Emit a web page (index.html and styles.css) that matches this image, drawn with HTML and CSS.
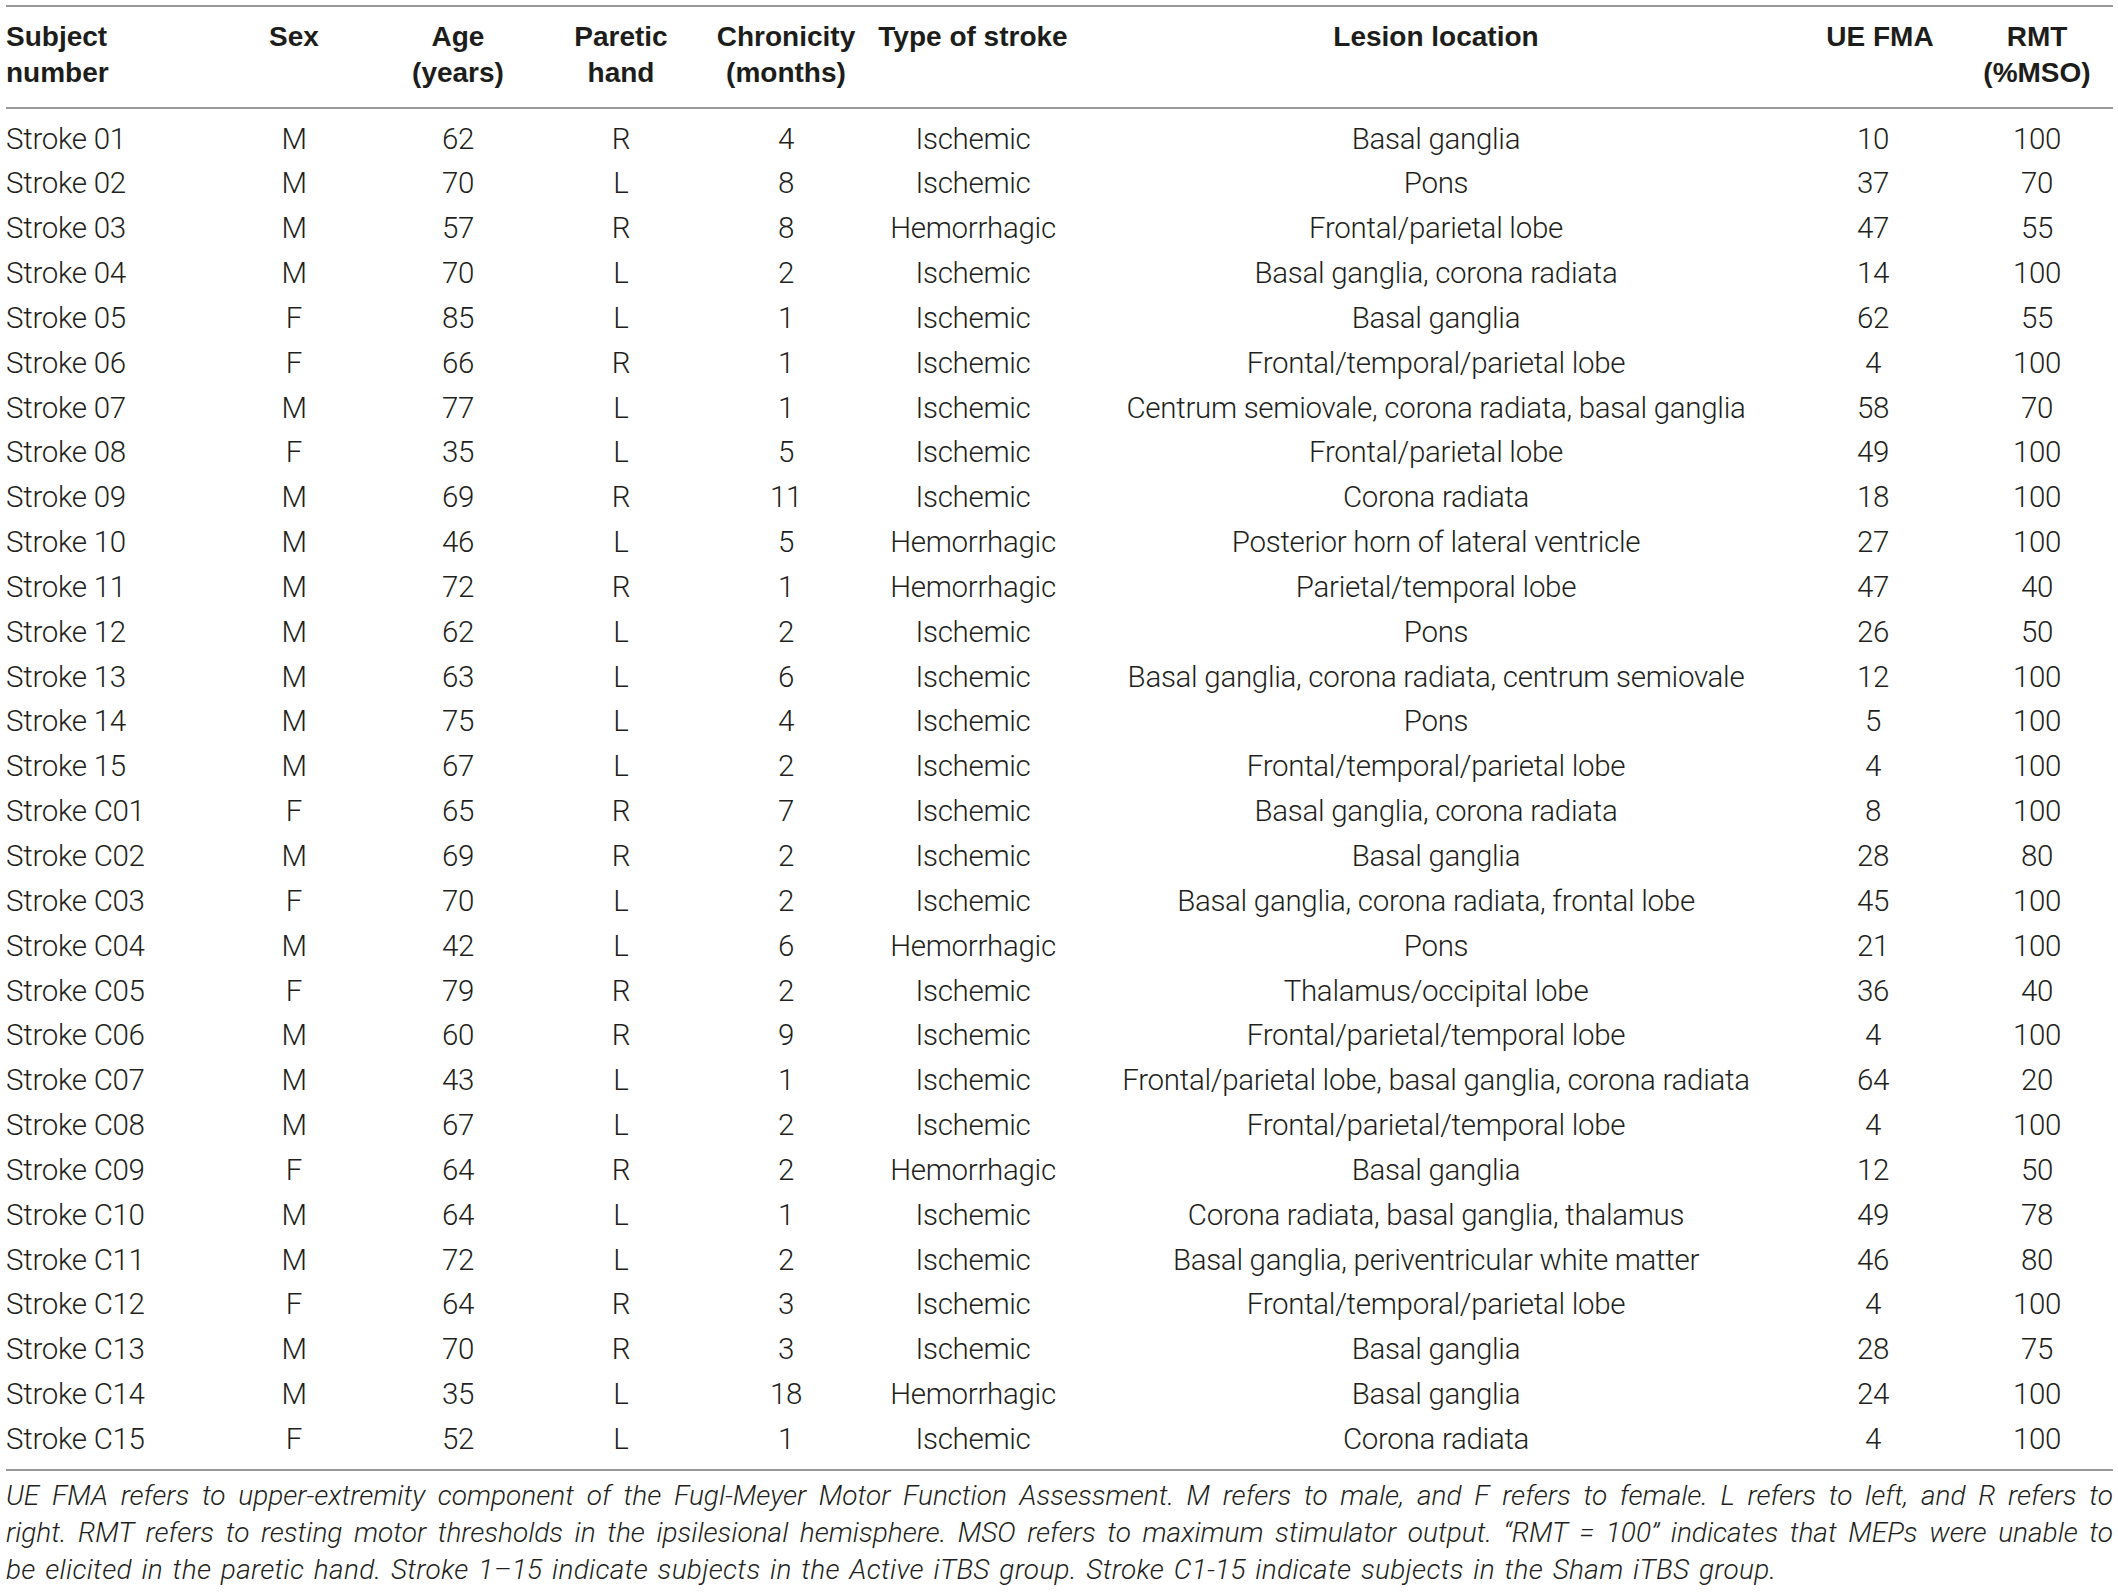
FILE: index.html
```html
<!DOCTYPE html>
<html lang="en">
<head>
<meta charset="utf-8">
<title>Subject characteristics</title>
<link rel="stylesheet" href="styles.css">
</head>
<body>
<div class="page">
  <table class="data">
    <colgroup>
      <col class="c-subj"><col class="c-sex"><col class="c-age"><col class="c-hand"><col class="c-chron"><col class="c-type"><col class="c-lesion"><col class="c-fma"><col class="c-rmt">
    </colgroup>
    <thead>
      <tr>
        <th class="left">Subject<br>number</th>
        <th>Sex</th>
        <th>Age<br>(years)</th>
        <th>Paretic<br>hand</th>
        <th class="chron">Chronicity<br>(months)</th>
        <th class="type">Type of stroke</th>
        <th>Lesion location</th>
        <th>UE FMA</th>
        <th class="rmt">RMT<br>(%MSO)</th>
      </tr>
    </thead>
    <tbody>
      <tr><td class="left">Stroke 01</td><td>M</td><td>62</td><td>R</td><td class="chron">4</td><td>Ischemic</td><td>Basal ganglia</td><td class="fma">10</td><td class="rmt">100</td></tr>
      <tr><td class="left">Stroke 02</td><td>M</td><td>70</td><td>L</td><td class="chron">8</td><td>Ischemic</td><td>Pons</td><td class="fma">37</td><td class="rmt">70</td></tr>
      <tr><td class="left">Stroke 03</td><td>M</td><td>57</td><td>R</td><td class="chron">8</td><td>Hemorrhagic</td><td>Frontal/parietal lobe</td><td class="fma">47</td><td class="rmt">55</td></tr>
      <tr><td class="left">Stroke 04</td><td>M</td><td>70</td><td>L</td><td class="chron">2</td><td>Ischemic</td><td>Basal ganglia, corona radiata</td><td class="fma">14</td><td class="rmt">100</td></tr>
      <tr><td class="left">Stroke 05</td><td>F</td><td>85</td><td>L</td><td class="chron">1</td><td>Ischemic</td><td>Basal ganglia</td><td class="fma">62</td><td class="rmt">55</td></tr>
      <tr><td class="left">Stroke 06</td><td>F</td><td>66</td><td>R</td><td class="chron">1</td><td>Ischemic</td><td>Frontal/temporal/parietal lobe</td><td class="fma">4</td><td class="rmt">100</td></tr>
      <tr><td class="left">Stroke 07</td><td>M</td><td>77</td><td>L</td><td class="chron">1</td><td>Ischemic</td><td>Centrum semiovale, corona radiata, basal ganglia</td><td class="fma">58</td><td class="rmt">70</td></tr>
      <tr><td class="left">Stroke 08</td><td>F</td><td>35</td><td>L</td><td class="chron">5</td><td>Ischemic</td><td>Frontal/parietal lobe</td><td class="fma">49</td><td class="rmt">100</td></tr>
      <tr><td class="left">Stroke 09</td><td>M</td><td>69</td><td>R</td><td class="chron">11</td><td>Ischemic</td><td>Corona radiata</td><td class="fma">18</td><td class="rmt">100</td></tr>
      <tr><td class="left">Stroke 10</td><td>M</td><td>46</td><td>L</td><td class="chron">5</td><td>Hemorrhagic</td><td>Posterior horn of lateral ventricle</td><td class="fma">27</td><td class="rmt">100</td></tr>
      <tr><td class="left">Stroke 11</td><td>M</td><td>72</td><td>R</td><td class="chron">1</td><td>Hemorrhagic</td><td>Parietal/temporal lobe</td><td class="fma">47</td><td class="rmt">40</td></tr>
      <tr><td class="left">Stroke 12</td><td>M</td><td>62</td><td>L</td><td class="chron">2</td><td>Ischemic</td><td>Pons</td><td class="fma">26</td><td class="rmt">50</td></tr>
      <tr><td class="left">Stroke 13</td><td>M</td><td>63</td><td>L</td><td class="chron">6</td><td>Ischemic</td><td>Basal ganglia, corona radiata, centrum semiovale</td><td class="fma">12</td><td class="rmt">100</td></tr>
      <tr><td class="left">Stroke 14</td><td>M</td><td>75</td><td>L</td><td class="chron">4</td><td>Ischemic</td><td>Pons</td><td class="fma">5</td><td class="rmt">100</td></tr>
      <tr><td class="left">Stroke 15</td><td>M</td><td>67</td><td>L</td><td class="chron">2</td><td>Ischemic</td><td>Frontal/temporal/parietal lobe</td><td class="fma">4</td><td class="rmt">100</td></tr>
      <tr><td class="left">Stroke C01</td><td>F</td><td>65</td><td>R</td><td class="chron">7</td><td>Ischemic</td><td>Basal ganglia, corona radiata</td><td class="fma">8</td><td class="rmt">100</td></tr>
      <tr><td class="left">Stroke C02</td><td>M</td><td>69</td><td>R</td><td class="chron">2</td><td>Ischemic</td><td>Basal ganglia</td><td class="fma">28</td><td class="rmt">80</td></tr>
      <tr><td class="left">Stroke C03</td><td>F</td><td>70</td><td>L</td><td class="chron">2</td><td>Ischemic</td><td>Basal ganglia, corona radiata, frontal lobe</td><td class="fma">45</td><td class="rmt">100</td></tr>
      <tr><td class="left">Stroke C04</td><td>M</td><td>42</td><td>L</td><td class="chron">6</td><td>Hemorrhagic</td><td>Pons</td><td class="fma">21</td><td class="rmt">100</td></tr>
      <tr><td class="left">Stroke C05</td><td>F</td><td>79</td><td>R</td><td class="chron">2</td><td>Ischemic</td><td>Thalamus/occipital lobe</td><td class="fma">36</td><td class="rmt">40</td></tr>
      <tr><td class="left">Stroke C06</td><td>M</td><td>60</td><td>R</td><td class="chron">9</td><td>Ischemic</td><td>Frontal/parietal/temporal lobe</td><td class="fma">4</td><td class="rmt">100</td></tr>
      <tr><td class="left">Stroke C07</td><td>M</td><td>43</td><td>L</td><td class="chron">1</td><td>Ischemic</td><td>Frontal/parietal lobe, basal ganglia, corona radiata</td><td class="fma">64</td><td class="rmt">20</td></tr>
      <tr><td class="left">Stroke C08</td><td>M</td><td>67</td><td>L</td><td class="chron">2</td><td>Ischemic</td><td>Frontal/parietal/temporal lobe</td><td class="fma">4</td><td class="rmt">100</td></tr>
      <tr><td class="left">Stroke C09</td><td>F</td><td>64</td><td>R</td><td class="chron">2</td><td>Hemorrhagic</td><td>Basal ganglia</td><td class="fma">12</td><td class="rmt">50</td></tr>
      <tr><td class="left">Stroke C10</td><td>M</td><td>64</td><td>L</td><td class="chron">1</td><td>Ischemic</td><td>Corona radiata, basal ganglia, thalamus</td><td class="fma">49</td><td class="rmt">78</td></tr>
      <tr><td class="left">Stroke C11</td><td>M</td><td>72</td><td>L</td><td class="chron">2</td><td>Ischemic</td><td>Basal ganglia, periventricular white matter</td><td class="fma">46</td><td class="rmt">80</td></tr>
      <tr><td class="left">Stroke C12</td><td>F</td><td>64</td><td>R</td><td class="chron">3</td><td>Ischemic</td><td>Frontal/temporal/parietal lobe</td><td class="fma">4</td><td class="rmt">100</td></tr>
      <tr><td class="left">Stroke C13</td><td>M</td><td>70</td><td>R</td><td class="chron">3</td><td>Ischemic</td><td>Basal ganglia</td><td class="fma">28</td><td class="rmt">75</td></tr>
      <tr><td class="left">Stroke C14</td><td>M</td><td>35</td><td>L</td><td class="chron">18</td><td>Hemorrhagic</td><td>Basal ganglia</td><td class="fma">24</td><td class="rmt">100</td></tr>
      <tr><td class="left">Stroke C15</td><td>F</td><td>52</td><td>L</td><td class="chron">1</td><td>Ischemic</td><td>Corona radiata</td><td class="fma">4</td><td class="rmt">100</td></tr>
    </tbody>
  </table>
  <p class="note"><span class="note-line">UE FMA refers to upper-extremity component of the Fugl-Meyer Motor Function Assessment. M refers to male, and F refers to female. L refers to left, and R refers to</span>
<span class="note-line">right. RMT refers to resting motor thresholds in the ipsilesional hemisphere. MSO refers to maximum stimulator output. “RMT = 100” indicates that MEPs were unable to</span>
<span class="note-last">be elicited in the paretic hand. Stroke 1–15 indicate subjects in the Active iTBS group. Stroke C1-15 indicate subjects in the Sham iTBS group.</span></p>
</div>
</body>
</html>
```

FILE: styles.css
```css
html, body {
  margin: 0;
  padding: 0;
  background: #ffffff;
}

.page {
  width: 2107px;
  padding: 5px 0 0 6px;
  color: #231f20;
}

.data {
  width: 2107px;
  table-layout: fixed;
  border-collapse: collapse;
  border-top: 2px solid #9a9a9a;
  border-bottom: 2px solid #9a9a9a;
}

.c-subj { width: 224px; }
.c-sex { width: 128px; }
.c-age { width: 200px; }
.c-hand { width: 126px; }
.c-chron { width: 184px; }
.c-type { width: 210px; }
.c-lesion { width: 716px; }
.c-fma { width: 172px; }
.c-rmt { width: 147px; }

.data thead tr {
  border-bottom: 2px solid #9a9a9a;
}

.data th {
  font-family: "Liberation Sans", Arial, sans-serif;
  font-weight: 700;
  font-size: 28px;
  line-height: 36px;
  text-align: center;
  vertical-align: top;
  padding: 12px 0 16px 0;
  white-space: nowrap;
  color: #1d1d1b;
}

.data td {
  font-family: Roboto, "Liberation Sans", sans-serif;
  font-weight: 300;
  font-size: 29.5px;
  letter-spacing: -0.3px;
  line-height: 44.85px;
  text-align: center;
  padding: 0;
  white-space: nowrap;
  color: #231f20;
}

.data tbody tr:first-child td {
  padding-top: 7.5px;
}

.data tbody tr:last-child td {
  padding-bottom: 7.5px;
}

.data .left {
  text-align: left;
}

.data th.chron,
.data td.chron {
  padding-left: 20px;
}

.data td.fma {
  padding-right: 14px;
}

.data th.rmt,
.data td.rmt {
  padding-right: 5px;
}

.note {
  margin: 6px 0 0 0;
  width: 2107px;
  font-family: Roboto, "Liberation Sans", sans-serif;
  font-weight: 300;
  font-style: italic;
  font-size: 28px;
  line-height: 37px;
  color: #231f20;
}

.note-line {
  display: block;
  white-space: nowrap;
  text-align: justify;
  text-align-last: justify;
}

.note-last {
  display: block;
  white-space: nowrap;
  text-align: left;
  letter-spacing: 0.3px;
  word-spacing: 2.5px;
}
```
